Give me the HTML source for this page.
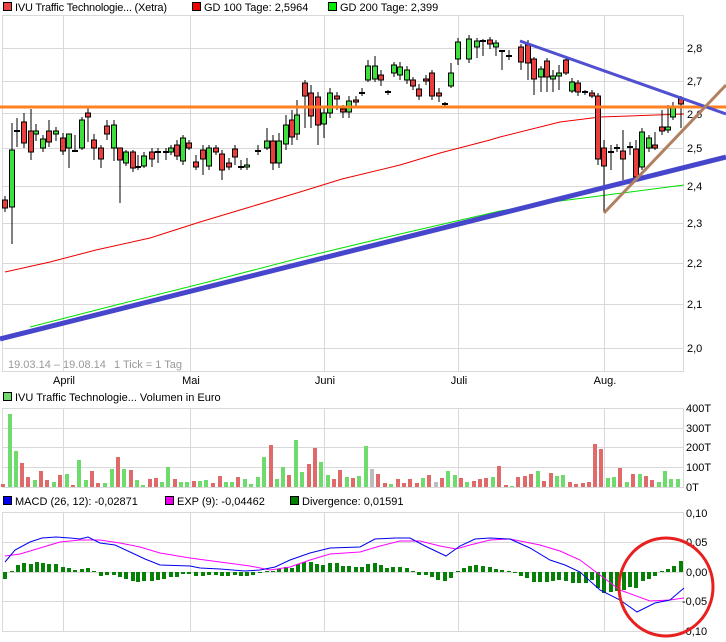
<!DOCTYPE html>
<html><head><meta charset="utf-8"><style>
html,body{margin:0;padding:0;background:#fff;}
svg{display:block;font-family:"Liberation Sans",Arial,sans-serif;font-size:11px;}
.r{fill:#ec3d3d;stroke:#000;stroke-width:1}
.g{fill:#3de03d;stroke:#000;stroke-width:1}
.vr{fill:#e06a6a}.vg{fill:#6ddc6d}.vy{fill:#bdbdbd}
.h{fill:#078007}
</style></head><body>
<svg width="726" height="642" viewBox="0 0 726 642" xmlns="http://www.w3.org/2000/svg">
<!-- legends -->
<rect x="3.5" y="2.5" width="8" height="8" fill="#ec4444" stroke="#000"/>
<text x="15" y="11" textLength="152">IVU Traffic Technologie... (Xetra)</text>
<rect x="192.5" y="2.5" width="8" height="8" fill="#ee0000" stroke="#000"/>
<text x="204" y="11">GD 100 Tage: 2,5964</text>
<rect x="328.5" y="2.5" width="8" height="8" fill="#00ee00" stroke="#000"/>
<text x="340" y="11">GD 200 Tage: 2,399</text>

<!-- main panel grid -->
<g stroke="#d9d9d9" stroke-width="1" fill="none">
<rect x="2.5" y="15.5" width="681" height="356"/>
<path d="M63.5 16V371M190.5 16V371M324.5 16V371M458.5 16V371M604.5 16V371"/>
<path d="M3 48.5H684M3 81.5H684M3 113.5H684M3 148.5H684M3 186.5H684M3 223.5H684M3 263.5H684M3 304.5H684M3 348.5H684"/>
</g>
<g fill="#000">
<text x="687" y="52">2,8</text><text x="687" y="85">2,7</text><text x="687" y="118">2,6</text>
<text x="687" y="152">2,5</text><text x="687" y="190">2,4</text><text x="687" y="227">2,3</text>
<text x="687" y="267">2,2</text><text x="687" y="308">2,1</text><text x="687" y="352">2,0</text>
</g>
<text x="8" y="368" fill="#999">19.03.14 – 19.08.14</text>
<text x="114" y="368" fill="#999">1 Tick = 1 Tag</text>
<g text-anchor="middle">
<text x="64" y="384">April</text><text x="191" y="384">Mai</text><text x="325" y="384">Juni</text>
<text x="459" y="384">Juli</text><text x="605" y="384">Aug.</text>
</g>

<!-- moving averages -->
<polyline fill="none" stroke="#ee0000" stroke-width="1" points="5,272 50,262 96,250 150,238 200,222 250,207 300,192 342,179 400,165 440,153 490,140 500,137 560,122 600,117 684,114"/>
<polyline fill="none" stroke="#00e000" stroke-width="1" points="30,327 120,304 200,284 300,258 400,234 500,211 560,201 684,185"/>

<!-- wicks -->
<path stroke="#000" stroke-width="1" fill="none" d="M5 196V212M12 123V244M17 118V147M24 113V148M31 109V160M36 124V141M43 135V152M49 120V147M56 127V141M63 133V155M69 134V168M75 135V151M82 117V150M88 108V142M94 134V160M101 145V168M107 120V140M114 120V161M120 148V203M126 150V166M133 150V172M138 155V170M144 152V168M152 148V167M158 148V163M166 148V160M171 145V155M177 140V160M183 135V165M189 140V150M196 155V170M203 145V175M209 145V170M216 145V155M222 150V180M229 158V170M235 145V165M241 160V170M247 158V170M258 145V155M267 128V150M273 135V170M279 133V168M286 115V150M292 110V145M297 100V140M305 80V128M311 85V128M318 92V145M324 108V138M330 88V118M337 92V110M343 105V118M349 96V118M356 96V106M362 88V96M368 60V82M375 56V82M381 70V86M388 90V95M394 62V77M400 62V80M407 66V84M413 77V90M419 84V100M426 75V85M432 70V100M439 88V102M445 102V106M451 63V88M458 38V65M469 35V63M477 38V58M483 39V56M490 37V49M496 40V56M502 50V70M509 50V60M521 44V70M528 40V80M534 57V95M541 66V92M547 58V92M553 70V92M559 65V90M566 57V75M572 78V93M578 80V96M585 90V95M592 90V98M598 93V165M604 140V212M611 145V170M617 144V152M623 130V180M630 142V155M636 140V180M642 128V170M649 135V152M655 132V150M662 110V135M668 105V133M673 102V120M681 96V128"/>
<!-- dashes -->
<path stroke="#000" stroke-width="2" fill="none" d="M14 131h6M72 151h6M135 167h6M155 152h6M163 152h6M238 167h6M255 151h6M359 93h6M385 92h6M442 104h6M480 41h6M499 51h6M506 56h6M582 92h6M608 152h6M614 148h6M627 147h6"/>
<!-- red bodies -->
<g class="r">
<rect x="2.5" y="200" width="5" height="8"/><rect x="21.5" y="122" width="5" height="21"/><rect x="28.5" y="131" width="5" height="21"/><rect x="46.5" y="131" width="5" height="11"/><rect x="60.5" y="138" width="5" height="13"/><rect x="85.5" y="113" width="5" height="4"/><rect x="91.5" y="140" width="5" height="8"/><rect x="98.5" y="148" width="5" height="11"/><rect x="104.5" y="126" width="5" height="8"/><rect x="117.5" y="148" width="5" height="12"/><rect x="130.5" y="152" width="5" height="16"/><rect x="149.5" y="152" width="5" height="7"/><rect x="174.5" y="145" width="5" height="11"/><rect x="186.5" y="143" width="5" height="5"/><rect x="193.5" y="162" width="5" height="5"/><rect x="200.5" y="150" width="5" height="9"/><rect x="213.5" y="148" width="5" height="4"/><rect x="219.5" y="154" width="5" height="16"/><rect x="226.5" y="163" width="5" height="4"/><rect x="232.5" y="149" width="5" height="8"/><rect x="270.5" y="141" width="5" height="22"/><rect x="289.5" y="120" width="5" height="17"/><rect x="302.5" y="83" width="5" height="13"/><rect x="308.5" y="93" width="5" height="23"/><rect x="315.5" y="97" width="5" height="28"/><rect x="334.5" y="96" width="5" height="3"/><rect x="340.5" y="109" width="5" height="3"/><rect x="353.5" y="100" width="5" height="2"/><rect x="378.5" y="75" width="5" height="5"/><rect x="410.5" y="80" width="5" height="6"/><rect x="416.5" y="89" width="5" height="7"/><rect x="423.5" y="79" width="5" height="2"/><rect x="429.5" y="73" width="5" height="23"/><rect x="436.5" y="93" width="5" height="3"/><rect x="487.5" y="40" width="5" height="4"/><rect x="518.5" y="47" width="5" height="15"/><rect x="525.5" y="45" width="5" height="18"/><rect x="531.5" y="59" width="5" height="20"/><rect x="544.5" y="61" width="5" height="16"/><rect x="563.5" y="60" width="5" height="13"/><rect x="575.5" y="83" width="5" height="9"/><rect x="589.5" y="93" width="5" height="3"/><rect x="595.5" y="96" width="5" height="63"/><rect x="601.5" y="148" width="5" height="18"/><rect x="620.5" y="151" width="5" height="8"/><rect x="633.5" y="149" width="5" height="28"/><rect x="652.5" y="145" width="5" height="3"/><rect x="659.5" y="127" width="5" height="4"/><rect x="678.5" y="99" width="5" height="5"/>
</g>
<g class="g">
<rect x="9.5" y="150" width="5" height="57"/><rect x="33.5" y="131" width="5" height="3"/><rect x="40.5" y="139" width="5" height="9"/><rect x="53.5" y="131" width="5" height="3"/><rect x="66.5" y="134" width="5" height="14"/><rect x="79.5" y="120" width="5" height="28"/><rect x="111.5" y="125" width="5" height="23"/><rect x="123.5" y="152" width="5" height="11"/><rect x="141.5" y="156" width="5" height="10"/><rect x="168.5" y="148" width="5" height="4"/><rect x="180.5" y="138" width="5" height="23"/><rect x="206.5" y="148" width="5" height="18"/><rect x="244.5" y="165" width="5" height="2"/><rect x="264.5" y="141" width="5" height="7"/><rect x="276.5" y="141" width="5" height="22"/><rect x="283.5" y="125" width="5" height="19"/><rect x="294.5" y="115" width="5" height="19"/><rect x="321.5" y="113" width="5" height="11"/><rect x="327.5" y="93" width="5" height="20"/><rect x="346.5" y="101" width="5" height="11"/><rect x="365.5" y="66" width="5" height="14"/><rect x="372.5" y="66" width="5" height="13"/><rect x="391.5" y="65" width="5" height="8"/><rect x="397.5" y="67" width="5" height="8"/><rect x="404.5" y="70" width="5" height="10"/><rect x="448.5" y="73" width="5" height="13"/><rect x="455.5" y="42" width="5" height="17"/><rect x="466.5" y="39" width="5" height="20"/><rect x="474.5" y="41" width="5" height="6"/><rect x="493.5" y="43" width="5" height="4"/><rect x="538.5" y="69" width="5" height="8"/><rect x="550.5" y="76" width="5" height="3"/><rect x="556.5" y="73" width="5" height="3"/><rect x="569.5" y="82" width="5" height="9"/><rect x="639.5" y="132" width="5" height="35"/><rect x="646.5" y="138" width="5" height="10"/><rect x="665.5" y="127" width="5" height="3"/><rect x="670.5" y="107" width="5" height="10"/>
</g>

<!-- trend lines -->
<line x1="0" y1="107" x2="726" y2="107" stroke="#ff8020" stroke-width="3"/>
<line x1="0" y1="339" x2="726" y2="157" stroke="#4646cc" stroke-width="5"/>
<line x1="520" y1="41" x2="726" y2="114" stroke="#5050d0" stroke-width="3"/>
<line x1="604" y1="213" x2="726" y2="85" stroke="#b08060" stroke-width="3"/>

<!-- volume -->
<rect x="3.5" y="392.5" width="8" height="8" fill="#6ddc6d" stroke="#000"/>
<text x="15" y="401">IVU Traffic Technologie... Volumen in Euro</text>
<g stroke="#d9d9d9" fill="none">
<rect x="2.5" y="408.5" width="681" height="79"/>
<path d="M63.5 409V487M190.5 409V487M324.5 409V487M458.5 409V487M604.5 409V487M3 428.5H684M3 447.5H684M3 467.5H684"/>
</g>
<text x="686" y="412">400T</text><text x="686" y="432">300T</text><text x="686" y="451">200T</text><text x="686" y="471">100T</text><text x="686" y="491">0T</text>
<g>
<rect class="vr" x="1" y="484" width="4" height="3"/><rect class="vg" x="8" y="414" width="4" height="73"/><rect class="vg" x="14" y="451" width="4" height="36"/><rect class="vr" x="20" y="463" width="4" height="24"/><rect class="vr" x="26" y="477" width="4" height="10"/><rect class="vg" x="33" y="480" width="4" height="7"/><rect class="vr" x="39" y="471" width="4" height="16"/><rect class="vr" x="45" y="480" width="4" height="7"/><rect class="vg" x="52" y="482" width="4" height="5"/><rect class="vr" x="58" y="475" width="4" height="12"/><rect class="vg" x="65" y="474" width="4" height="13"/><rect class="vr" x="71" y="485" width="4" height="2"/><rect class="vg" x="77" y="460" width="4" height="27"/><rect class="vg" x="84" y="480" width="4" height="7"/><rect class="vr" x="90" y="471" width="4" height="16"/><rect class="vr" x="96" y="483" width="4" height="4"/><rect class="vg" x="103" y="483" width="4" height="4"/><rect class="vg" x="110" y="469" width="4" height="18"/><rect class="vr" x="116" y="457" width="4" height="30"/><rect class="vg" x="122" y="469" width="4" height="18"/><rect class="vr" x="129" y="470" width="4" height="17"/><rect class="vg" x="135" y="480" width="4" height="7"/><rect class="vg" x="141" y="485" width="4" height="2"/><rect class="vr" x="148" y="479" width="4" height="8"/><rect class="vr" x="154" y="478" width="4" height="9"/><rect class="vg" x="160" y="482" width="4" height="5"/><rect class="vg" x="166" y="467" width="4" height="20"/><rect class="vr" x="173" y="479" width="4" height="8"/><rect class="vg" x="179" y="482" width="4" height="5"/><rect class="vg" x="185" y="482" width="4" height="5"/><rect class="vr" x="192" y="481" width="4" height="6"/><rect class="vg" x="198" y="481" width="4" height="6"/><rect class="vg" x="204" y="480" width="4" height="7"/><rect class="vr" x="211" y="483" width="4" height="4"/><rect class="vr" x="218" y="476" width="4" height="11"/><rect class="vg" x="224" y="482" width="4" height="5"/><rect class="vg" x="230" y="482" width="4" height="5"/><rect class="vr" x="236" y="477" width="4" height="10"/><rect class="vg" x="243" y="479" width="4" height="8"/><rect class="vg" x="249" y="484" width="4" height="3"/><rect class="vg" x="256" y="477" width="4" height="10"/><rect class="vg" x="262" y="457" width="4" height="30"/><rect class="vr" x="269" y="445" width="4" height="42"/><rect class="vg" x="275" y="479" width="4" height="8"/><rect class="vg" x="281" y="467" width="4" height="20"/><rect class="vr" x="287" y="475" width="4" height="12"/><rect class="vg" x="294" y="440" width="4" height="47"/><rect class="vg" x="300" y="472" width="4" height="15"/><rect class="vr" x="307" y="464" width="4" height="23"/><rect class="vr" x="313" y="448" width="4" height="39"/><rect class="vg" x="319" y="462" width="4" height="25"/><rect class="vg" x="326" y="475" width="4" height="12"/><rect class="vr" x="332" y="479" width="4" height="8"/><rect class="vr" x="338" y="470" width="4" height="17"/><rect class="vg" x="345" y="477" width="4" height="10"/><rect class="vr" x="351" y="478" width="4" height="9"/><rect class="vg" x="357" y="476" width="4" height="11"/><rect class="vg" x="364" y="446" width="4" height="41"/><rect class="vy" x="370" y="469" width="4" height="18"/><rect class="vr" x="376" y="474" width="4" height="13"/><rect class="vr" x="383" y="483" width="4" height="4"/><rect class="vg" x="389" y="484" width="4" height="3"/><rect class="vr" x="396" y="479" width="4" height="8"/><rect class="vr" x="402" y="483" width="4" height="4"/><rect class="vr" x="408" y="479" width="4" height="8"/><rect class="vr" x="415" y="483" width="4" height="4"/><rect class="vg" x="421" y="478" width="4" height="9"/><rect class="vr" x="427" y="475" width="4" height="12"/><rect class="vy" x="434" y="482" width="4" height="5"/><rect class="vr" x="440" y="478" width="4" height="9"/><rect class="vg" x="446" y="471" width="4" height="16"/><rect class="vg" x="453" y="475" width="4" height="12"/><rect class="vr" x="459" y="478" width="4" height="9"/><rect class="vg" x="465" y="482" width="4" height="5"/><rect class="vr" x="472" y="481" width="4" height="6"/><rect class="vr" x="478" y="479" width="4" height="8"/><rect class="vr" x="484" y="478" width="4" height="9"/><rect class="vg" x="491" y="477" width="4" height="10"/><rect class="vr" x="497" y="466" width="4" height="21"/><rect class="vr" x="504" y="485" width="4" height="2"/><rect class="vg" x="510" y="486" width="4" height="1"/><rect class="vr" x="516" y="477" width="4" height="10"/><rect class="vr" x="523" y="476" width="4" height="11"/><rect class="vr" x="529" y="474" width="4" height="13"/><rect class="vg" x="536" y="471" width="4" height="16"/><rect class="vr" x="542" y="481" width="4" height="6"/><rect class="vr" x="549" y="473" width="4" height="14"/><rect class="vg" x="555" y="476" width="4" height="11"/><rect class="vg" x="561" y="475" width="4" height="12"/><rect class="vr" x="568" y="482" width="4" height="5"/><rect class="vr" x="574" y="484" width="4" height="3"/><rect class="vr" x="581" y="483" width="4" height="4"/><rect class="vr" x="587" y="482" width="4" height="5"/><rect class="vr" x="593" y="444" width="4" height="43"/><rect class="vr" x="599" y="449" width="4" height="38"/><rect class="vg" x="606" y="478" width="4" height="9"/><rect class="vg" x="612" y="477" width="4" height="10"/><rect class="vr" x="618" y="468" width="4" height="19"/><rect class="vg" x="625" y="482" width="4" height="5"/><rect class="vr" x="631" y="474" width="4" height="13"/><rect class="vg" x="638" y="474" width="4" height="13"/><rect class="vr" x="644" y="476" width="4" height="11"/><rect class="vr" x="650" y="480" width="4" height="7"/><rect class="vg" x="657" y="482" width="4" height="5"/><rect class="vg" x="663" y="471" width="4" height="16"/><rect class="vg" x="669" y="479" width="4" height="8"/><rect class="vg" x="676" y="479" width="4" height="8"/>
</g>

<!-- MACD -->
<rect x="3.5" y="496.5" width="8" height="8" fill="#0000ee" stroke="#000"/>
<text x="15" y="505">MACD (26, 12): -0,02871</text>
<rect x="165.5" y="496.5" width="8" height="8" fill="#ee00ee" stroke="#000"/>
<text x="177" y="505">EXP (9): -0,04462</text>
<rect x="290.5" y="496.5" width="8" height="8" fill="#008000" stroke="#000"/>
<text x="302" y="505">Divergence: 0,01591</text>
<g stroke="#d9d9d9" fill="none">
<rect x="2.5" y="512.5" width="681" height="119"/>
<path d="M63.5 513V631M190.5 513V631M324.5 513V631M458.5 513V631M604.5 513V631M3 542.5H684M3 572.5H684M3 601.5H684"/>
</g>
<text x="686" y="517">0,10</text><text x="686" y="546">0,05</text><text x="686" y="576">0,00</text><text x="682" y="605">-0,05</text><text x="682" y="635">-0,10</text>
<g class="h">
<rect x="3" y="572" width="4" height="7"/><rect x="10" y="571" width="4" height="1"/><rect x="16" y="565" width="4" height="7"/><rect x="22" y="563" width="4" height="9"/><rect x="29" y="564" width="4" height="8"/><rect x="35" y="562" width="4" height="10"/><rect x="41" y="563" width="4" height="9"/><rect x="47" y="564" width="4" height="8"/><rect x="54" y="564" width="4" height="8"/><rect x="61" y="567" width="4" height="5"/><rect x="67" y="568" width="4" height="4"/><rect x="73" y="570" width="4" height="2"/><rect x="80" y="569" width="4" height="3"/><rect x="86" y="568" width="4" height="4"/><rect x="92" y="571" width="4" height="1"/><rect x="99" y="572" width="4" height="4"/><rect x="105" y="572" width="4" height="3"/><rect x="112" y="572" width="4" height="3"/><rect x="118" y="572" width="4" height="5"/><rect x="124" y="572" width="4" height="7"/><rect x="131" y="572" width="4" height="9"/><rect x="136" y="572" width="4" height="10"/><rect x="142" y="572" width="4" height="9"/><rect x="150" y="572" width="4" height="9"/><rect x="156" y="572" width="4" height="8"/><rect x="162" y="572" width="4" height="7"/><rect x="169" y="572" width="4" height="5"/><rect x="175" y="572" width="4" height="5"/><rect x="181" y="572" width="4" height="2"/><rect x="187" y="572" width="4" height="2"/><rect x="194" y="572" width="4" height="4"/><rect x="201" y="572" width="4" height="4"/><rect x="207" y="572" width="4" height="3"/><rect x="214" y="572" width="4" height="3"/><rect x="220" y="572" width="4" height="4"/><rect x="226" y="572" width="4" height="4"/><rect x="233" y="572" width="4" height="3"/><rect x="239" y="572" width="4" height="4"/><rect x="245" y="572" width="4" height="4"/><rect x="251" y="572" width="4" height="3"/><rect x="258" y="572" width="4" height="1"/><rect x="265" y="571" width="4" height="1"/><rect x="271" y="571" width="4" height="1"/><rect x="277" y="569" width="4" height="3"/><rect x="284" y="567" width="4" height="5"/><rect x="290" y="568" width="4" height="4"/><rect x="296" y="564" width="4" height="8"/><rect x="302" y="562" width="4" height="10"/><rect x="309" y="562" width="4" height="10"/><rect x="315" y="564" width="4" height="8"/><rect x="321" y="565" width="4" height="7"/><rect x="328" y="563" width="4" height="9"/><rect x="335" y="563" width="4" height="9"/><rect x="341" y="566" width="4" height="6"/><rect x="347" y="566" width="4" height="6"/><rect x="354" y="567" width="4" height="5"/><rect x="360" y="567" width="4" height="5"/><rect x="366" y="564" width="4" height="8"/><rect x="373" y="563" width="4" height="9"/><rect x="379" y="565" width="4" height="7"/><rect x="385" y="568" width="4" height="4"/><rect x="391" y="567" width="4" height="5"/><rect x="398" y="567" width="4" height="5"/><rect x="405" y="568" width="4" height="4"/><rect x="411" y="571" width="4" height="1"/><rect x="417" y="572" width="4" height="3"/><rect x="424" y="572" width="4" height="3"/><rect x="430" y="572" width="4" height="5"/><rect x="436" y="572" width="4" height="8"/><rect x="443" y="572" width="4" height="9"/><rect x="449" y="572" width="4" height="6"/><rect x="456" y="571" width="4" height="1"/><rect x="462" y="568" width="4" height="4"/><rect x="468" y="566" width="4" height="6"/><rect x="474" y="565" width="4" height="7"/><rect x="481" y="566" width="4" height="6"/><rect x="488" y="567" width="4" height="5"/><rect x="494" y="569" width="4" height="3"/><rect x="500" y="570" width="4" height="2"/><rect x="507" y="571" width="4" height="1"/><rect x="513" y="572" width="4" height="1"/><rect x="519" y="572" width="4" height="4"/><rect x="525" y="572" width="4" height="6"/><rect x="532" y="572" width="4" height="10"/><rect x="538" y="572" width="4" height="10"/><rect x="545" y="572" width="4" height="10"/><rect x="551" y="572" width="4" height="9"/><rect x="557" y="572" width="4" height="8"/><rect x="564" y="572" width="4" height="9"/><rect x="571" y="572" width="4" height="11"/><rect x="577" y="572" width="4" height="11"/><rect x="584" y="572" width="4" height="11"/><rect x="590" y="572" width="4" height="8"/><rect x="596" y="572" width="4" height="16"/><rect x="602" y="572" width="4" height="21"/><rect x="609" y="572" width="4" height="20"/><rect x="615" y="572" width="4" height="19"/><rect x="622" y="572" width="4" height="18"/><rect x="628" y="572" width="4" height="15"/><rect x="634" y="572" width="4" height="16"/><rect x="641" y="572" width="4" height="9"/><rect x="647" y="572" width="4" height="7"/><rect x="653" y="572" width="4" height="4"/><rect x="660" y="571" width="4" height="1"/><rect x="666" y="569" width="4" height="3"/><rect x="672" y="566" width="4" height="6"/><rect x="679" y="561" width="4" height="11"/>
</g>
<polyline fill="none" stroke="#ff00ff" stroke-width="1" points="5,556 20,554 40,548 60,542 80,540 100,540 120,543 140,547 160,553 190,558 220,562 250,566 270,570 290,567 310,560 330,554 360,552 380,546 400,541 420,541 440,546 456,549 470,545 490,540 510,539 540,545 560,551 580,560 600,575 620,590 650,601 670,600 684,598"/>
<polyline fill="none" stroke="#0000ee" stroke-width="1" points="5,562 15,550 30,542 42,538 56,537 70,538 80,539 88,537 100,543 115,545 130,552 145,559 160,565 190,566 200,568 220,569 245,571 260,570 275,567 290,560 310,553 330,548 360,547 375,539 395,538 410,538 425,546 446,556 460,546 475,539 490,538 510,539 530,548 550,560 565,565 580,572 600,590 620,600 637,612 655,603 670,600 684,588"/>
<ellipse cx="666" cy="587" rx="47" ry="49" fill="none" stroke="#e82020" stroke-width="3"/>
</svg>
</body></html>
